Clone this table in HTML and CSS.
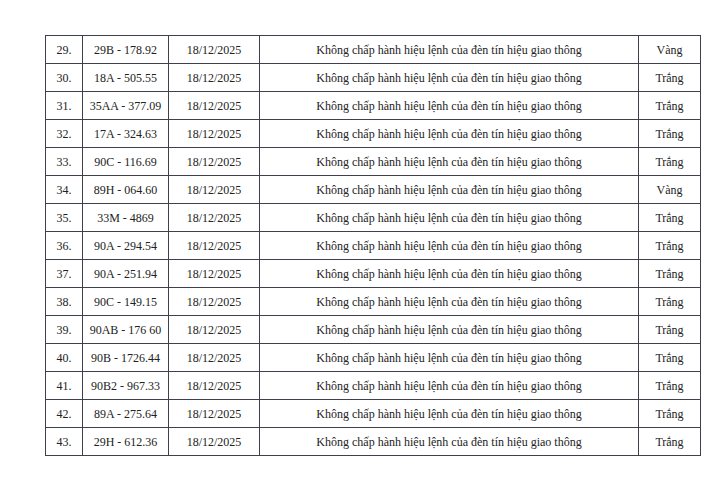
FILE: index.html
```html
<!DOCTYPE html>
<html lang="vi">
<head>
<meta charset="utf-8">
<link rel="stylesheet" href="styles.css">
</head>
<body>
<table class="list">
<colgroup>
<col class="c-no"><col class="c-plate"><col class="c-date"><col class="c-desc"><col class="c-color">
</colgroup>
<tbody>
<tr><td>29.</td><td>29B - 178.92</td><td>18/12/2025</td><td>Không chấp hành hiệu lệnh của đèn tín hiệu giao thông</td><td>Vàng</td></tr>
<tr><td>30.</td><td>18A - 505.55</td><td>18/12/2025</td><td>Không chấp hành hiệu lệnh của đèn tín hiệu giao thông</td><td>Trắng</td></tr>
<tr><td>31.</td><td>35AA - 377.09</td><td>18/12/2025</td><td>Không chấp hành hiệu lệnh của đèn tín hiệu giao thông</td><td>Trắng</td></tr>
<tr><td>32.</td><td>17A - 324.63</td><td>18/12/2025</td><td>Không chấp hành hiệu lệnh của đèn tín hiệu giao thông</td><td>Trắng</td></tr>
<tr><td>33.</td><td>90C - 116.69</td><td>18/12/2025</td><td>Không chấp hành hiệu lệnh của đèn tín hiệu giao thông</td><td>Trắng</td></tr>
<tr><td>34.</td><td>89H - 064.60</td><td>18/12/2025</td><td>Không chấp hành hiệu lệnh của đèn tín hiệu giao thông</td><td>Vàng</td></tr>
<tr><td>35.</td><td>33M - 4869</td><td>18/12/2025</td><td>Không chấp hành hiệu lệnh của đèn tín hiệu giao thông</td><td>Trắng</td></tr>
<tr><td>36.</td><td>90A - 294.54</td><td>18/12/2025</td><td>Không chấp hành hiệu lệnh của đèn tín hiệu giao thông</td><td>Trắng</td></tr>
<tr><td>37.</td><td>90A - 251.94</td><td>18/12/2025</td><td>Không chấp hành hiệu lệnh của đèn tín hiệu giao thông</td><td>Trắng</td></tr>
<tr><td>38.</td><td>90C - 149.15</td><td>18/12/2025</td><td>Không chấp hành hiệu lệnh của đèn tín hiệu giao thông</td><td>Trắng</td></tr>
<tr><td>39.</td><td>90AB - 176 60</td><td>18/12/2025</td><td>Không chấp hành hiệu lệnh của đèn tín hiệu giao thông</td><td>Trắng</td></tr>
<tr><td>40.</td><td>90B - 1726.44</td><td>18/12/2025</td><td>Không chấp hành hiệu lệnh của đèn tín hiệu giao thông</td><td>Trắng</td></tr>
<tr><td>41.</td><td>90B2 - 967.33</td><td>18/12/2025</td><td>Không chấp hành hiệu lệnh của đèn tín hiệu giao thông</td><td>Trắng</td></tr>
<tr><td>42.</td><td>89A - 275.64</td><td>18/12/2025</td><td>Không chấp hành hiệu lệnh của đèn tín hiệu giao thông</td><td>Trắng</td></tr>
<tr><td>43.</td><td>29H - 612.36</td><td>18/12/2025</td><td>Không chấp hành hiệu lệnh của đèn tín hiệu giao thông</td><td>Trắng</td></tr>
</tbody>
</table>
</body>
</html>
```
FILE: styles.css
```css
html, body {
  margin: 0;
  background: #ffffff;
}
body {
  padding: 35px 0 0 45px;
  font-family: "Liberation Serif", "Times New Roman", serif;
  font-size: 12px;
  color: #222222;
}
.list {
  border-collapse: collapse;
  table-layout: fixed;
  width: 655px;
}
.c-no { width: 37px; }
.c-plate { width: 86px; }
.c-date { width: 91px; }
.c-desc { width: 379px; }
.c-color { width: 62px; }
.list td {
  border: 1px solid #40404c;
  height: 25px;
  padding: 2px 0 0;
  text-align: center;
  vertical-align: middle;
  white-space: nowrap;
}
```
